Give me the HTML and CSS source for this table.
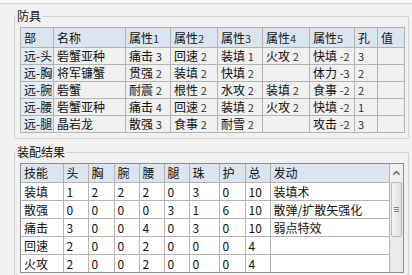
FILE: index.html
```html
<!DOCTYPE html>
<html lang="zh-CN">
<head>
  <meta charset="UTF-8">
  <title>装备配置</title>
  <link rel="stylesheet" href="styles.css">
</head>
<body>
  <div class="topbar"></div>

  <fieldset class="group">
    <legend>防具</legend>
    <table class="grid armor">
      <colgroup>
        <col style="width:33px"><col style="width:72px"><col style="width:45px"><col style="width:47px"><col style="width:45px"><col style="width:47px"><col style="width:45px"><col style="width:23px"><col style="width:27px">
      </colgroup>
      <tr class="head"><th>部</th><th>名称</th><th>属性<small>1</small></th><th>属性<small>2</small></th><th>属性<small>3</small></th><th>属性<small>4</small></th><th>属性<small>5</small></th><th>孔</th><th>值</th></tr>
      <tr><th>远-头</th><td>砦蟹亚种</td><td>痛击 <small>3</small></td><td>回速 <small>2</small></td><td>装填 <small>1</small></td><td>火攻 <small>2</small></td><td>快填 <small>-2</small></td><td><small>3</small></td><td></td></tr>
      <tr><th>远-胸</th><td>将军镰蟹</td><td>贯强 <small>2</small></td><td>装填 <small>2</small></td><td>快填 <small>2</small></td><td></td><td>体力 <small>-3</small></td><td><small>2</small></td><td></td></tr>
      <tr><th>远-腕</th><td>砦蟹</td><td>耐震 <small>2</small></td><td>根性 <small>2</small></td><td>水攻 <small>2</small></td><td>装填 <small>2</small></td><td>食事 <small>-2</small></td><td><small>2</small></td><td></td></tr>
      <tr><th>远-腰</th><td>砦蟹亚种</td><td>痛击 <small>4</small></td><td>回速 <small>2</small></td><td>装填 <small>2</small></td><td>火攻 <small>2</small></td><td>快填 <small>-2</small></td><td><small>1</small></td><td></td></tr>
      <tr><th>远-腿</th><td>晶岩龙</td><td>散强 <small>3</small></td><td>食事 <small>2</small></td><td>耐雪 <small>2</small></td><td></td><td>攻击 <small>-2</small></td><td><small>3</small></td><td></td></tr>
    </table>
  </fieldset>

  <fieldset class="group">
    <legend>装配结果</legend>
    <div class="listview">
      <table class="grid result">
        <colgroup>
          <col style="width:42px"><col style="width:25px"><col style="width:26px"><col style="width:25px"><col style="width:25px"><col style="width:25px"><col style="width:30px"><col style="width:26px"><col style="width:25px"><col style="width:119px">
        </colgroup>
        <tr class="head"><th>技能</th><th>头</th><th>胸</th><th>腕</th><th>腰</th><th>腿</th><th>珠</th><th>护</th><th>总</th><th>发动</th></tr>
        <tr><td>装填</td><td>1</td><td>2</td><td>2</td><td>2</td><td>0</td><td>3</td><td>0</td><td>10</td><td>装填术</td></tr>
        <tr><td>散强</td><td>0</td><td>0</td><td>0</td><td>0</td><td>3</td><td>1</td><td>6</td><td>10</td><td>散弹/扩散矢强化</td></tr>
        <tr><td>痛击</td><td>3</td><td>0</td><td>0</td><td>4</td><td>0</td><td>3</td><td>0</td><td>10</td><td>弱点特效</td></tr>
        <tr><td>回速</td><td>2</td><td>0</td><td>0</td><td>2</td><td>0</td><td>0</td><td>0</td><td>4</td><td></td></tr>
        <tr><td>火攻</td><td>2</td><td>0</td><td>0</td><td>2</td><td>0</td><td>0</td><td>0</td><td>4</td><td></td></tr>
      </table>
      <div class="vscroll">
        <div class="arrow">
          <svg width="7" height="4" viewBox="0 0 7 4"><path d="M0.5 3.5 L3.5 0.5 L6.5 3.5" fill="none" stroke="#555" stroke-width="1.2"/></svg>
        </div>
        <div class="thumb"><span class="grip"></span></div>
      </div>
    </div>
  </fieldset>
</body>
</html>
```

FILE: styles.css
```css
/* 窗口底色和字体 */
body { margin: 0; background: #f0f0f0; color: #111; font: 12px/14px "Noto Sans CJK SC", "DejaVu Sans", sans-serif; overflow: hidden; }
.topbar { height: 3px; background: #f8f8f8; border-bottom: 1px solid #d6d6d6; }

/* 分组框 */
.group { margin: 5px 3px 0 14px; padding: 0 4px 5px 5px; border: 1px solid #d3d3d3; border-radius: 2px; min-width: 0; }
.group legend { margin-left: -4px; padding: 0 1px; line-height: 14px; }
.group + .group { margin-top: 6px; }

/* 表格 */
.grid { border-collapse: collapse; table-layout: fixed; margin-top: 4px; }
.grid th, .grid td { height: 16px; padding: 0 0 0 3px; border: 1px solid #b4b4b4; text-align: left; font-weight: normal; white-space: nowrap; overflow: hidden; }
.grid small { font-size: 11px; color: #333; }
.grid td small { margin-left: 3px; }
.grid td small:only-child { margin-left: 0; }
.grid .head th { background: #dbe5f2; height: 19px; }

.armor { width: 384px; border: 1px solid #8f8f8f; }
.armor th { background: #e2eaf5; }

/* 结果列表 + 滚动条 */
.listview { display: flex; width: 382px; margin-top: 4px; border: 1px solid #8f8f8f; background: #fff; }
.result { width: 368px; margin: 0; border-style: hidden; background: #fff; }
.result .head th { height: 18px; }
.result td { height: 17px; }

.vscroll { width: 14px; display: flex; flex-direction: column; background: #eaeaea; border-left: 1px solid #b4b4b4; }
.vscroll .arrow { height: 18px; display: flex; align-items: center; justify-content: center; background: #f0f0f0; }
.vscroll .thumb { height: 53px; margin: 0 1px; border: 1px solid #bdbdbd; border-radius: 2px; background: linear-gradient(to right, #f3f3f3, #dedede); display: flex; align-items: center; justify-content: center; }
.vscroll .grip { width: 5px; height: 5px; border-top: 1px solid #8a8a8a; border-bottom: 1px solid #8a8a8a; box-sizing: border-box; position: relative; }
.vscroll .grip::after { content: ""; position: absolute; left: 0; right: 0; top: 1px; border-top: 1px solid #8a8a8a; }
```
